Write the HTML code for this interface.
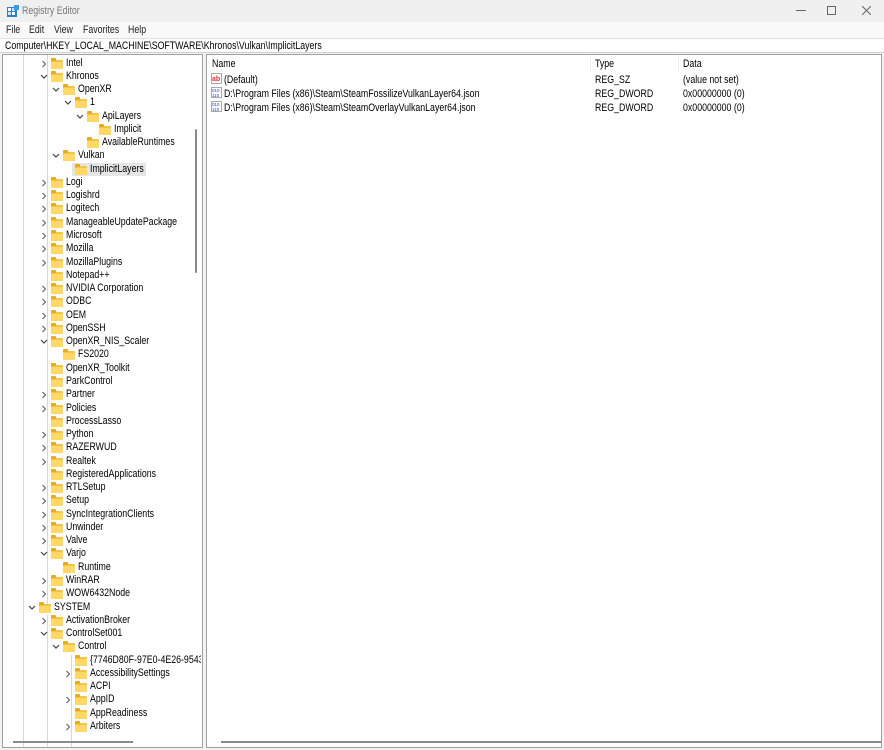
<!DOCTYPE html>
<html><head><meta charset="utf-8"><style>
*{margin:0;padding:0;box-sizing:border-box}
body{width:884px;height:750px;overflow:hidden;background:#f3f3f3;font-family:"Liberation Sans",sans-serif;font-size:11px;color:#000;position:relative}
.abs{position:absolute}
.sx{transform:scaleX(.8);transform-origin:0 0;white-space:nowrap}
#title{left:0;top:0;width:884px;height:22px;background:#f0f0f0}
#menu{left:0;top:22px;width:884px;height:16px;background:#f9f9f9}
#menu span{position:absolute;top:2px;color:#222;transform:scaleX(.8);transform-origin:0 0}
#addr{left:0;top:38px;width:884px;height:15px;background:#fff;border-top:1px solid #e2e2e2;border-bottom:1px solid #cfcfcf}
#left{left:2px;top:54px;width:201px;height:694px;background:#fff;border:1px solid #a0a0a0;overflow:hidden}
#right{left:206px;top:54px;width:676px;height:694px;background:#fff;border:1px solid #a0a0a0;overflow:hidden}
.row{position:absolute;height:13px;line-height:13px;white-space:nowrap;transform:scaleX(.8);transform-origin:0 0}
.fold{position:absolute;width:12px;height:9px;background:#f6c343;border-radius:1px}
.fold:before{content:"";position:absolute;left:0;top:-2px;width:5px;height:3px;background:#e8a925;border-radius:1px 1px 0 0}
.fold:after{content:"";position:absolute;left:0;top:2px;width:12px;height:7px;background:#ffd867;border-radius:0 0 1px 1px}
.vl{position:absolute;width:1px;background:#d8d8d8}
</style></head><body>
<div id="title" class="abs">
<svg class="abs" style="left:7px;top:5px" width="12" height="12"><rect x="0" y="2" width="10" height="10" fill="#2f7fd0"/><rect x="1" y="3" width="3" height="3" fill="#fff"/><rect x="5" y="3" width="3" height="3" fill="#cfe3f7"/><rect x="1" y="7" width="3" height="3" fill="#cfe3f7"/><rect x="5" y="7" width="3" height="3" fill="#fff"/><rect x="7" y="0" width="5" height="5" fill="#3a9ae8"/></svg>
<span class="abs sx" style="left:22px;top:5px;color:#777">Registry Editor</span>
<span class="abs" style="left:796px;top:10px;width:10px;height:1px;background:#666"></span>
<span class="abs" style="left:827px;top:6px;width:9px;height:9px;border:1px solid #666"></span>
<svg class="abs" style="left:862px;top:6px" width="9" height="9"><path d="M0 0L9 9M9 0L0 9" stroke="#666" stroke-width="1"/></svg>
</div>
<div id="menu" class="abs"><span style="left:6px">File</span><span style="left:29px">Edit</span><span style="left:54px">View</span><span style="left:83px">Favorites</span><span style="left:128px">Help</span></div>
<div id="addr" class="abs"><div class="abs sx" style="left:5px;top:1px">Computer\HKEY_LOCAL_MACHINE\SOFTWARE\Khronos\Vulkan\ImplicitLayers</div></div>
<div id="left" class="abs">
<div class="vl" style="left:20px;top:0;height:694px"></div>
<div class="vl" style="left:44px;top:0;height:550px"></div>
<div class="vl" style="left:44px;top:560px;height:134px"></div>
<div class="vl" style="left:68px;top:600px;height:94px"></div>
<div id="tree"></div>
<div class="abs" style="left:192px;top:74px;width:2px;height:144px;background:#8a8a8a;border-radius:1px"></div>
<div class="abs" style="left:10px;top:686px;width:120px;height:2px;background:#8a8a8a"></div>
</div>
<div id="right" class="abs">
<div class="abs sx" style="left:5px;top:3px">Name</div>
<div class="abs" style="left:383px;top:0;width:1px;height:18px;background:#eee"></div>
<div class="abs sx" style="left:388px;top:3px">Type</div>
<div class="abs" style="left:471px;top:0;width:1px;height:18px;background:#eee"></div>
<div class="abs sx" style="left:476px;top:3px">Data</div>
<svg class="abs" style="left:4px;top:18px" width="11" height="11"><rect x="0.5" y="0.5" width="10" height="10" fill="#fff" stroke="#aaa"/><text x="1" y="8" font-size="7" fill="#d33" font-family="Liberation Sans" font-weight="bold">ab</text></svg>
<div class="abs sx" style="left:17px;top:19px">(Default)</div><div class="abs sx" style="left:388px;top:19px">REG_SZ</div><div class="abs sx" style="left:476px;top:19px">(value not set)</div>
<svg class="abs" style="left:4px;top:32px" width="11" height="11"><rect x="0.5" y="0.5" width="10" height="10" fill="#fff" stroke="#aaa"/><text x="1" y="5" font-size="4.5" fill="#24c">010</text><text x="1" y="10" font-size="4.5" fill="#24c">110</text></svg>
<div class="abs sx" style="left:17px;top:33px">D:\Program Files (x86)\Steam\SteamFossilizeVulkanLayer64.json</div><div class="abs sx" style="left:388px;top:33px">REG_DWORD</div><div class="abs sx" style="left:476px;top:33px">0x00000000 (0)</div>
<svg class="abs" style="left:4px;top:46px" width="11" height="11"><rect x="0.5" y="0.5" width="10" height="10" fill="#fff" stroke="#aaa"/><text x="1" y="5" font-size="4.5" fill="#24c">010</text><text x="1" y="10" font-size="4.5" fill="#24c">110</text></svg>
<div class="abs sx" style="left:17px;top:47px">D:\Program Files (x86)\Steam\SteamOverlayVulkanLayer64.json</div><div class="abs sx" style="left:388px;top:47px">REG_DWORD</div><div class="abs sx" style="left:476px;top:47px">0x00000000 (0)</div>
<div class="abs" style="left:14px;top:686px;width:660px;height:2px;background:#8a8a8a"></div>
</div>
<script>
var R=[["Intel",1,">"],["Khronos",1,"v"],["OpenXR",2,"v"],["1",3,"v"],["ApiLayers",4,"v"],["Implicit",5,""],["AvailableRuntimes",4,""],["Vulkan",2,"v"],["ImplicitLayers",3,"","s"],["Logi",1,">"],["Logishrd",1,">"],["Logitech",1,">"],["ManageableUpdatePackage",1,">"],["Microsoft",1,">"],["Mozilla",1,">"],["MozillaPlugins",1,">"],["Notepad++",1,""],["NVIDIA Corporation",1,">"],["ODBC",1,">"],["OEM",1,">"],["OpenSSH",1,">"],["OpenXR_NIS_Scaler",1,"v"],["FS2020",2,""],["OpenXR_Toolkit",1,""],["ParkControl",1,""],["Partner",1,">"],["Policies",1,">"],["ProcessLasso",1,""],["Python",1,">"],["RAZERWUD",1,">"],["Realtek",1,">"],["RegisteredApplications",1,""],["RTLSetup",1,">"],["Setup",1,">"],["SyncIntegrationClients",1,">"],["Unwinder",1,">"],["Valve",1,">"],["Varjo",1,"v"],["Runtime",2,""],["WinRAR",1,">"],["WOW6432Node",1,">"],["SYSTEM",0,"v"],["ActivationBroker",1,">"],["ControlSet001",1,"v"],["Control",2,"v"],["{7746D80F-97E0-4E26-9543",3,""],["AccessibilitySettings",3,">"],["ACPI",3,""],["AppID",3,">"],["AppReadiness",3,""],["Arbiters",3,">"]];
var h="";
R.forEach(function(r,i){var top=0.5+13.27*i;var tx=53+12*r[1]-2;
if(r[3])h+='<div class="abs" style="left:'+(tx-18)+'px;top:'+(top+1)+'px;width:74px;height:13px;background:#e5e5e5"></div>';
if(r[2]==">")h+='<svg class="abs" style="left:'+(tx-25)+'px;top:'+(top+4)+'px" width="6" height="8"><path d="M1.5 1L4.5 4L1.5 7" fill="none" stroke="#555" stroke-width="1"/></svg>';
if(r[2]=="v")h+='<svg class="abs" style="left:'+(tx-26)+'px;top:'+(top+5)+'px" width="8" height="6"><path d="M1 1L4 4L7 1" fill="none" stroke="#444" stroke-width="1.2"/></svg>';
h+='<div class="fold" style="left:'+(tx-15)+'px;top:'+(top+4)+'px"></div>';
h+='<div class="abs" style="left:'+tx+'px;top:'+(top+1)+'px;width:'+(198-tx)+'px;height:13px;overflow:hidden"><div class="row" style="left:0;top:0">'+r[0]+'</div></div>';});
document.getElementById("tree").innerHTML=h;
</script>
</body></html>
